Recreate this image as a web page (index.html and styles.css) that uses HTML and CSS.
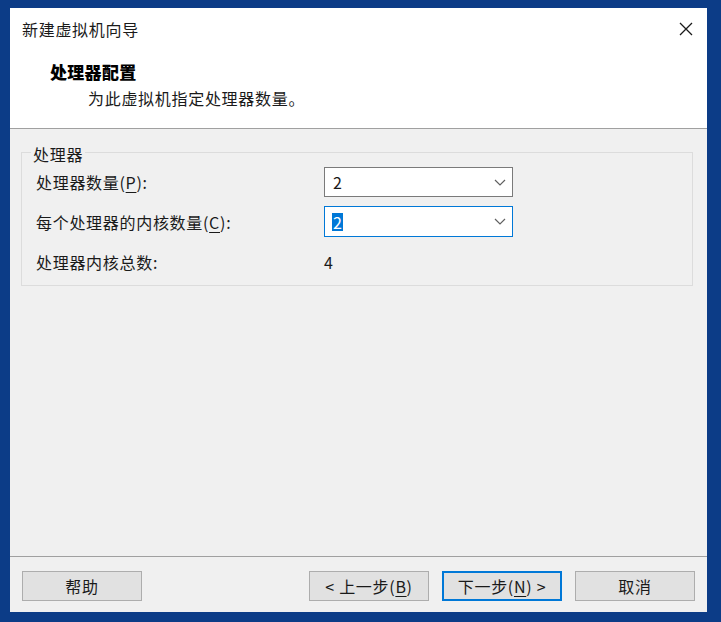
FILE: index.html
```html
<!DOCTYPE html>
<html lang="zh-CN">
<head>
<meta charset="utf-8">
<title>新建虚拟机向导</title>
<link rel="stylesheet" href="styles.css">
</head>
<body>
<div class="window">
  <div class="header">
    <div class="titlebar">
      <span class="title">新建虚拟机向导</span>
      <svg class="close" width="14" height="14" viewBox="0 0 14 14" aria-hidden="true"><path d="M1 1 L13 13 M13 1 L1 13" stroke="#1a1a1a" stroke-width="1.3" fill="none"/></svg>
    </div>
    <div class="heading">处理器配置</div>
    <div class="subheading">为此虚拟机指定处理器数量。</div>
  </div>
  <div class="content">
    <fieldset class="group">
      <legend>处理器</legend>
      <div class="grid">
        <label class="lbl">处理器数量(<u>P</u>):</label>
        <div class="combo"><span class="val">2</span><svg class="chev" width="12" height="7" viewBox="0 0 12 7"><path d="M1 1 L6 6 L11 1" stroke="#606060" stroke-width="1.2" fill="none"/></svg></div>
        <label class="lbl">每个处理器的内核数量(<u>C</u>):</label>
        <div class="combo focused"><span class="val sel">2</span><svg class="chev" width="12" height="7" viewBox="0 0 12 7"><path d="M1 1 L6 6 L11 1" stroke="#606060" stroke-width="1.2" fill="none"/></svg></div>
        <span class="lbl">处理器内核总数:</span>
        <span class="total">4</span>
      </div>
    </fieldset>
  </div>
  <div class="footer">
    <button class="btn">帮助</button>
    <span class="spacer"></span>
    <button class="btn">&lt; 上一步(<u>B</u>)</button>
    <button class="btn default">下一步(<u>N</u>) &gt;</button>
    <button class="btn">取消</button>
  </div>
</div>
</body>
</html>
```

FILE: styles.css
```css
* { box-sizing: border-box; }
html, body { margin: 0; height: 100%; }
body {
  background: #0c3c87;
  padding: 8px 14px 10px 10px;
  font-family: "Noto Sans CJK SC", "Noto Sans", sans-serif;
  font-size: 16px;
  letter-spacing: 0.7px;
  color: #1a1a1a;
}
.window {
  height: 604px;
  background: #f0f0f0;
  display: flex;
  flex-direction: column;
}
.header {
  background: #fff;
  height: 121px;
  border-bottom: 1px solid #a0a0a0;
}
.titlebar {
  height: 42px;
  display: flex;
  align-items: center;
  justify-content: space-between;
  padding: 0 14px 0 12px;
}
.title { line-height: 22px; }
.heading {
  margin-top: 11px;
  padding-left: 40px;
  font-weight: 900;
  font-size: 17px;
  letter-spacing: 0.3px;
  line-height: 22px;
  color: #000;
}
.subheading {
  margin-top: 4px;
  padding-left: 78px;
  line-height: 22px;
}
.content {
  flex: 1;
  padding: 11px 14px 0 11px;
}
.group {
  margin: 0;
  border: 1px solid #dcdcdc;
  padding: 3px 0 7px 14px;
}
.group legend {
  padding: 4px 2px 0 2px;
  margin-left: -5px;
  line-height: 20px;
}
.grid {
  display: grid;
  grid-template-columns: 288px 189px;
  grid-template-rows: 30px 31px 32px;
  row-gap: 9px;
  align-items: center;
}
.lbl { line-height: 22px; }
u { text-underline-offset: 3px; }
.combo {
  height: 100%;
  border: 1px solid #7a7a7a;
  background: #fff;
  display: flex;
  align-items: center;
  justify-content: space-between;
  padding: 0 6px 0 7px;
}
.combo.focused { border-color: #0078d7; }
.val { line-height: 18px; padding: 0 1px; letter-spacing: 0; }
.val.sel { background: #0078d7; color: #fff; }
.chev { display: block; }
.total { line-height: 22px; }
.footer {
  border-top: 1px solid #a0a0a0;
  height: 56px;
  display: flex;
  align-items: flex-start;
  padding: 14px 12px 0 12px;
  gap: 13px;
}
.spacer { flex: 1; }
.btn {
  width: 120px;
  height: 30px;
  background: #e1e1e1;
  border: 1px solid #adadad;
  font-family: inherit;
  font-size: 16px;
  letter-spacing: 0.7px;
  color: #1a1a1a;
  padding: 0;
}
.btn.default { border: 2px solid #0078d7; }
```
